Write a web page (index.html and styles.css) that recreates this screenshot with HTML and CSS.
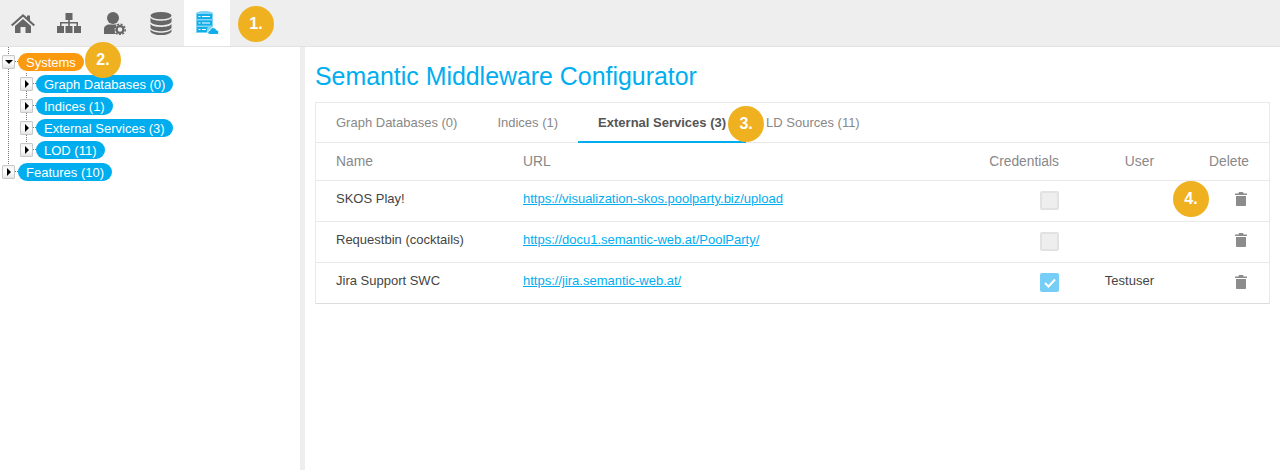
FILE: index.html
```html
<!DOCTYPE html>
<html lang="en">

<head>
  <meta charset="UTF-8">
  <title>Semantic Middleware Configurator</title>
  <link rel="stylesheet" href="styles.css">
</head>

<body>
  <nav class="toolbar">
    <a class="tool">
      <svg viewBox="0 0 24 19" width="24" height="19"><path d="M12 0 L16 3.6 V1.5 H19 V6.3 L24 10.8 L22.6 12.2 L12 2.8 L1.4 12.2 L0 10.8 Z M4 12 L12 4.9 L20 12 V19 H14.5 V13 H9.5 V19 H4 Z"/></svg>
    </a>
    <a class="tool">
      <svg viewBox="0 0 24 20" width="24" height="20"><path d="M8.5 0 H15.5 V7 H12.8 V9 H21 V13 H24 V20 H17 V13 H19.5 V10.5 H12.8 V13 H15.5 V20 H8.5 V13 H11.2 V10.5 H4.5 V13 H7 V20 H0 V13 H3 V9 H11.2 V7 H8.5 Z"/></svg>
    </a>
    <a class="tool">
      <svg viewBox="0 0 22 23" width="22" height="23"><circle cx="9" cy="6" r="6"/><path d="M0 22 V17 C0 14 3 12.5 5 12.5 H13 C11.5 14 10.5 16 10.5 18 C10.5 19.5 11 21 12 22 Z"/><circle cx="16" cy="17.5" r="3.4" fill="none" stroke="#666" stroke-width="2.2"/><circle cx="16" cy="17.5" r="5.2" fill="none" stroke="#666" stroke-width="1.6" stroke-dasharray="2 1.5"/></svg>
    </a>
    <a class="tool">
      <svg viewBox="0 0 22 23" width="22" height="23"><ellipse cx="11" cy="3.6" rx="10.5" ry="3.6"/><path d="M0.5 5.8 C2 8 7 8.8 11 8.8 C15 8.8 20 8 21.5 5.8 V10 C20 12.4 15 13.2 11 13.2 C7 13.2 2 12.4 0.5 10 Z"/><path d="M0.5 12 C2 14.3 7 15 11 15 C15 15 20 14.3 21.5 12 V16 C20 18.4 15 19.2 11 19.2 C7 19.2 2 18.4 0.5 16 Z"/><path d="M0.5 17.6 C2 20 7 20.8 11 20.8 C15 20.8 20 20 21.5 17.6 V19.4 C20 22 15 23 11 23 C7 23 2 22 0.5 19.4 Z"/></svg>
    </a>
    <a class="tool tool-active">
      <svg viewBox="0 0 24 24" width="24" height="24">
        <path class="srv-frame" d="M1 2 C3 0.5 6 0 9.5 0 C13 0 16 0.5 18 2 V22 H1 Z"/>
        <path class="srv" d="M2 3 H17 V8 H2 Z M2 9.5 H17 V14.5 H2 Z M2 16 H13 C12 17 11.5 19 12 21 H2 Z"/>
        <path class="srv-line" d="M3.5 5.5 H5.5 M7 5.5 H15 M3.5 12 H5.5 M7 12 H15 M3.5 18.5 H5.5 M7 18.5 H11"/>
        <path class="srv-cloud" d="M15 23.5 C12 23.5 12 19.5 14.8 19.5 C15 16 20.5 15.5 21.5 19 C24.5 19 24.5 23.5 22 23.5 Z"/>
      </svg>
    </a>
    <span class="step step-1">1.</span>
  </nav>

  <div class="main">
    <aside class="tree">
      <ul class="tree-root">
        <li>
          <div class="node"><span class="toggle"><i class="arrow-down"></i></span><span class="pill pill-open">Systems</span><span class="step step-2">2.</span></div>
          <ul class="tree-sub">
            <li><div class="node"><span class="toggle"><i class="arrow-right"></i></span><span class="pill">Graph Databases (0)</span></div></li>
            <li><div class="node"><span class="toggle"><i class="arrow-right"></i></span><span class="pill">Indices (1)</span></div></li>
            <li><div class="node"><span class="toggle"><i class="arrow-right"></i></span><span class="pill">External Services (3)</span></div></li>
            <li><div class="node"><span class="toggle"><i class="arrow-right"></i></span><span class="pill">LOD (11)</span></div></li>
          </ul>
        </li>
        <li><div class="node"><span class="toggle"><i class="arrow-right"></i></span><span class="pill">Features (10)</span></div></li>
      </ul>
    </aside>

    <section class="content">
      <h1>Semantic Middleware Configurator</h1>
      <div class="panel">
        <div class="tabs">
          <a class="tab">Graph Databases (0)</a>
          <a class="tab">Indices (1)</a>
          <a class="tab tab-active">External Services (3)<span class="step step-3">3.</span></a>
          <a class="tab">LD Sources (11)</a>
        </div>
        <table>
          <thead>
            <tr>
              <th class="col-name">Name</th>
              <th class="col-url">URL</th>
              <th class="col-cred">Credentials</th>
              <th class="col-user">User</th>
              <th class="col-del">Delete</th>
            </tr>
          </thead>
          <tbody>
            <tr>
              <td>SKOS Play!</td>
              <td><a href="#">https://visualization-skos.poolparty.biz/upload</a></td>
              <td class="col-cred"><span class="check"></span></td>
              <td class="col-user"></td>
              <td class="col-del"><span class="step step-4">4.</span><svg class="trash" viewBox="0 0 12 14" width="12" height="14"><path d="M4 0 H8 L8.6 1.4 H12 V3 H0 V1.4 H3.4 Z M1 4 H11 V13 C11 13.6 10.6 14 10 14 H2 C1.4 14 1 13.6 1 13 Z"/></svg></td>
            </tr>
            <tr>
              <td>Requestbin (cocktails)</td>
              <td><a href="#">https://docu1.semantic-web.at/PoolParty/</a></td>
              <td class="col-cred"><span class="check"></span></td>
              <td class="col-user"></td>
              <td class="col-del"><svg class="trash" viewBox="0 0 12 14" width="12" height="14"><path d="M4 0 H8 L8.6 1.4 H12 V3 H0 V1.4 H3.4 Z M1 4 H11 V13 C11 13.6 10.6 14 10 14 H2 C1.4 14 1 13.6 1 13 Z"/></svg></td>
            </tr>
            <tr>
              <td>Jira Support SWC</td>
              <td><a href="#">https://jira.semantic-web.at/</a></td>
              <td class="col-cred"><span class="check check-on"><svg viewBox="0 0 12 10" width="12" height="10"><path d="M1 5 L4.5 8.5 L11 1.5" fill="none" stroke="#fff" stroke-width="2"/></svg></span></td>
              <td class="col-user">Testuser</td>
              <td class="col-del"><svg class="trash" viewBox="0 0 12 14" width="12" height="14"><path d="M4 0 H8 L8.6 1.4 H12 V3 H0 V1.4 H3.4 Z M1 4 H11 V13 C11 13.6 10.6 14 10 14 H2 C1.4 14 1 13.6 1 13 Z"/></svg></td>
            </tr>
          </tbody>
        </table>
      </div>
    </section>
  </div>
</body>

</html>
```

FILE: styles.css
```css
:root {
  --blue: #00aeef;
  --orange: #fb9a0e;
  --step: #efb120;
  --line: #e9e9e9;
}

*,*::before,*::after { box-sizing: border-box; }

html, body { height: 100%; }

body {
  margin: 0;
  font-family: "Liberation Sans", Arial, sans-serif;
  font-size: 13px;
  color: #444;
  background: #fff;
  overflow: hidden;
}

.toolbar {
  position: relative;
  display: flex;
  height: 47px;
  background: #eeeeee;
  border-bottom: 1px solid #e2e2e2;
}

.tool {
  display: flex;
  align-items: center;
  justify-content: center;
  width: 46px;
  height: 46px;
  fill: #666;
}

.tool-active { background: #fff; }
.srv-frame { fill: #7fd3f5; }
.srv { fill: #12aeea; }
.srv-cloud { fill: #12aeea; stroke: #fff; stroke-width: 1; }
.srv-line { stroke: #fff; stroke-width: 1; fill: none; }

/* numbered callouts that sit over the screenshot */
.step {
  position: absolute;
  z-index: 2;
  width: 36px;
  height: 36px;
  border-radius: 50%;
  background: var(--step);
  color: #fff;
  font-size: 16px;
  font-weight: 700;
  line-height: 36px;
  text-align: center;
}

.step-1 { left: 238px; top: 6px; }
.step-2 { left: 83px; top: -9px; }
.step-3 { left: 150px; top: 3px; }
.step-4 { left: -1px; top: 0; }

.main {
  display: flex;
  height: calc(100% - 47px);
}

.tree {
  width: 305px;
  flex: none;
  padding: 4px 0 0 2px;
  border-right: 5px solid #eeeeee;
}

.tree ul {
  position: relative;
  list-style: none;
  margin: 0;
  padding: 0;
}

.tree .tree-sub { padding-left: 18px; }

/* dotted connector lines */
.tree-root::before,
.tree-sub::before {
  content: "";
  position: absolute;
  border-left: 1px dotted #777;
}

.tree-root::before { left: 6px; top: -4px; bottom: 11px; }
.tree-sub::before { left: 24px; top: 0; bottom: 11px; }

.node {
  position: relative;
  display: flex;
  align-items: center;
  height: 22px;
}

.toggle {
  position: relative;
  z-index: 1;
  display: flex;
  align-items: center;
  justify-content: center;
  width: 13px;
  height: 14px;
  margin-right: 3px;
  background: linear-gradient(#f2f2f2, #fff 50%, #e4e4e4);
  border: 1px solid #c8c8c8;
  border-radius: 1px;
  flex: none;
}

.toggle::after {
  content: "";
  position: absolute;
  left: 12px;
  top: 5px;
  width: 3px;
  border-top: 1px dotted #777;
}

.arrow-right {
  border-left: 4px solid #000;
  border-top: 4px solid transparent;
  border-bottom: 4px solid transparent;
}

.arrow-down {
  border-top: 4px solid #000;
  border-left: 4px solid transparent;
  border-right: 4px solid transparent;
}

.pill {
  height: 18px;
  padding: 0 8px;
  border-radius: 9px;
  background: var(--blue);
  color: #fff;
  font-size: 13px;
  line-height: 20px;
  white-space: nowrap;
}

.pill-open { background: var(--orange); }

.content {
  flex: 1;
  padding: 14px 10px 0;
}

h1 {
  margin: 0 0 10px;
  color: var(--blue);
  font-size: 24.9px;
  font-weight: 400;
  line-height: 31px;
}

.panel {
  border: 1px solid var(--line);
  border-bottom-color: #ddd;
}

.tabs {
  display: flex;
  height: 40px;
  border-bottom: 1px solid var(--line);
}

.tab {
  position: relative;
  display: block;
  height: 40px;
  padding: 0 20px;
  color: #888;
  line-height: 39px;
  white-space: nowrap;
}

.tab-active {
  color: #555;
  font-weight: 700;
  border-bottom: 2px solid var(--blue);
}

table {
  width: 100%;
  border-collapse: collapse;
  table-layout: fixed;
}

th {
  height: 37px;
  color: #888;
  font-size: 13.8px;
  font-weight: 400;
  text-align: left;
  padding: 0 20px;
  border-bottom: 1px solid var(--line);
}

td {
  position: relative;
  height: 41px;
  padding: 0 20px 4px;
  border-bottom: 1px solid var(--line);
}

tbody tr:last-child td { border-bottom: none; }

td a { color: var(--blue); }

.col-name { width: 187px; }
.col-url { width: 420px; }
.col-cred { width: 156px; text-align: right; }
.col-user { width: 95px; text-align: right; }
.col-del { text-align: right; }

td.col-cred { padding-bottom: 0; }
td.col-del { padding-bottom: 4px; }

.check {
  display: inline-block;
  width: 19px;
  height: 19px;
  vertical-align: middle;
  background: #eeeeee;
  border: 2px solid #e2e2e2;
  border-radius: 2px;
}

.check-on {
  display: inline-flex;
  align-items: center;
  justify-content: center;
  background: #76cdf6;
  border: none;
}

.trash {
  fill: #8c8c8c;
  vertical-align: middle;
  margin-right: 2px;
}
```
